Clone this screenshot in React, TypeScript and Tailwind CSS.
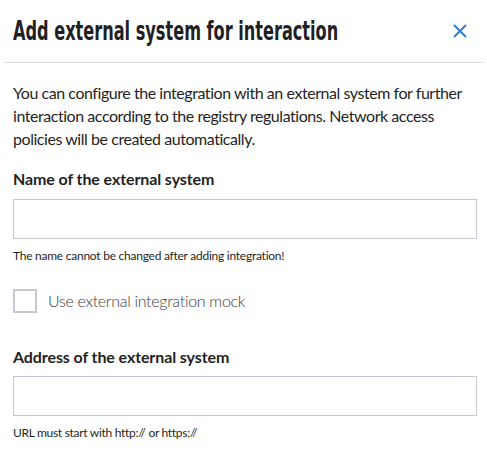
export default function App() {
  return (
    <div className="w-[487px] h-[464px] bg-white overflow-hidden" style={{ fontFamily: "Lato, 'Noto Sans', sans-serif" }}>
      <div className="flex items-center h-[63px] mx-[4px] pl-[9px] pr-[16px] border-b border-[#dcdbe6]">
        <div className="flex-1 min-w-0">
          <h1 className="text-[26px] font-bold text-[#1f1f24] leading-none whitespace-nowrap origin-left scale-x-[0.69]" style={{ fontFamily: "'DejaVu Sans Condensed', 'DejaVu Sans', sans-serif" }}>
            Add external system for interaction
          </h1>
        </div>
        <svg width="14" height="14" viewBox="0 0 14 14" className="shrink-0">
          <path d="M1 1L13 13M13 1L1 13" stroke="#2f7fd3" strokeWidth="2" />
        </svg>
      </div>
      <div className="px-[13px] pt-[18px] text-[#1f1f24]">
        <p className="text-[16px] leading-[23px] tracking-[-0.45px]">
          You can configure the integration with an external system for further interaction according to the registry regulations. Network access policies will be created automatically.
        </p>
        <label className="block mt-[17px] text-[16px] font-bold leading-[23px] tracking-[-0.1px]">Name of the external system</label>
        <div className="mt-[9px] h-[40px] w-[464px] border border-[#c8c6d7]"></div>
        <p className="mt-[9px] text-[12px] leading-[16px] tracking-[-0.25px]">The name cannot be changed after adding integration!</p>
        <div className="flex items-center mt-[25px] gap-[11px]">
          <div className="w-[24px] h-[24px] border-2 border-[#c8c6d7]"></div>
          <span className="text-[16px] font-light text-[#3a3a44] tracking-[-0.3px]">Use external integration mock</span>
        </div>
        <label className="block mt-[32px] text-[16px] font-bold leading-[23px] tracking-[-0.1px]">Address of the external system</label>
        <div className="mt-[8px] h-[40px] w-[464px] border border-[#c8c6d7]"></div>
        <p className="mt-[9px] text-[12px] leading-[16px] tracking-[-0.3px]">URL must start with http:// or https://</p>
      </div>
    </div>
  );
}
